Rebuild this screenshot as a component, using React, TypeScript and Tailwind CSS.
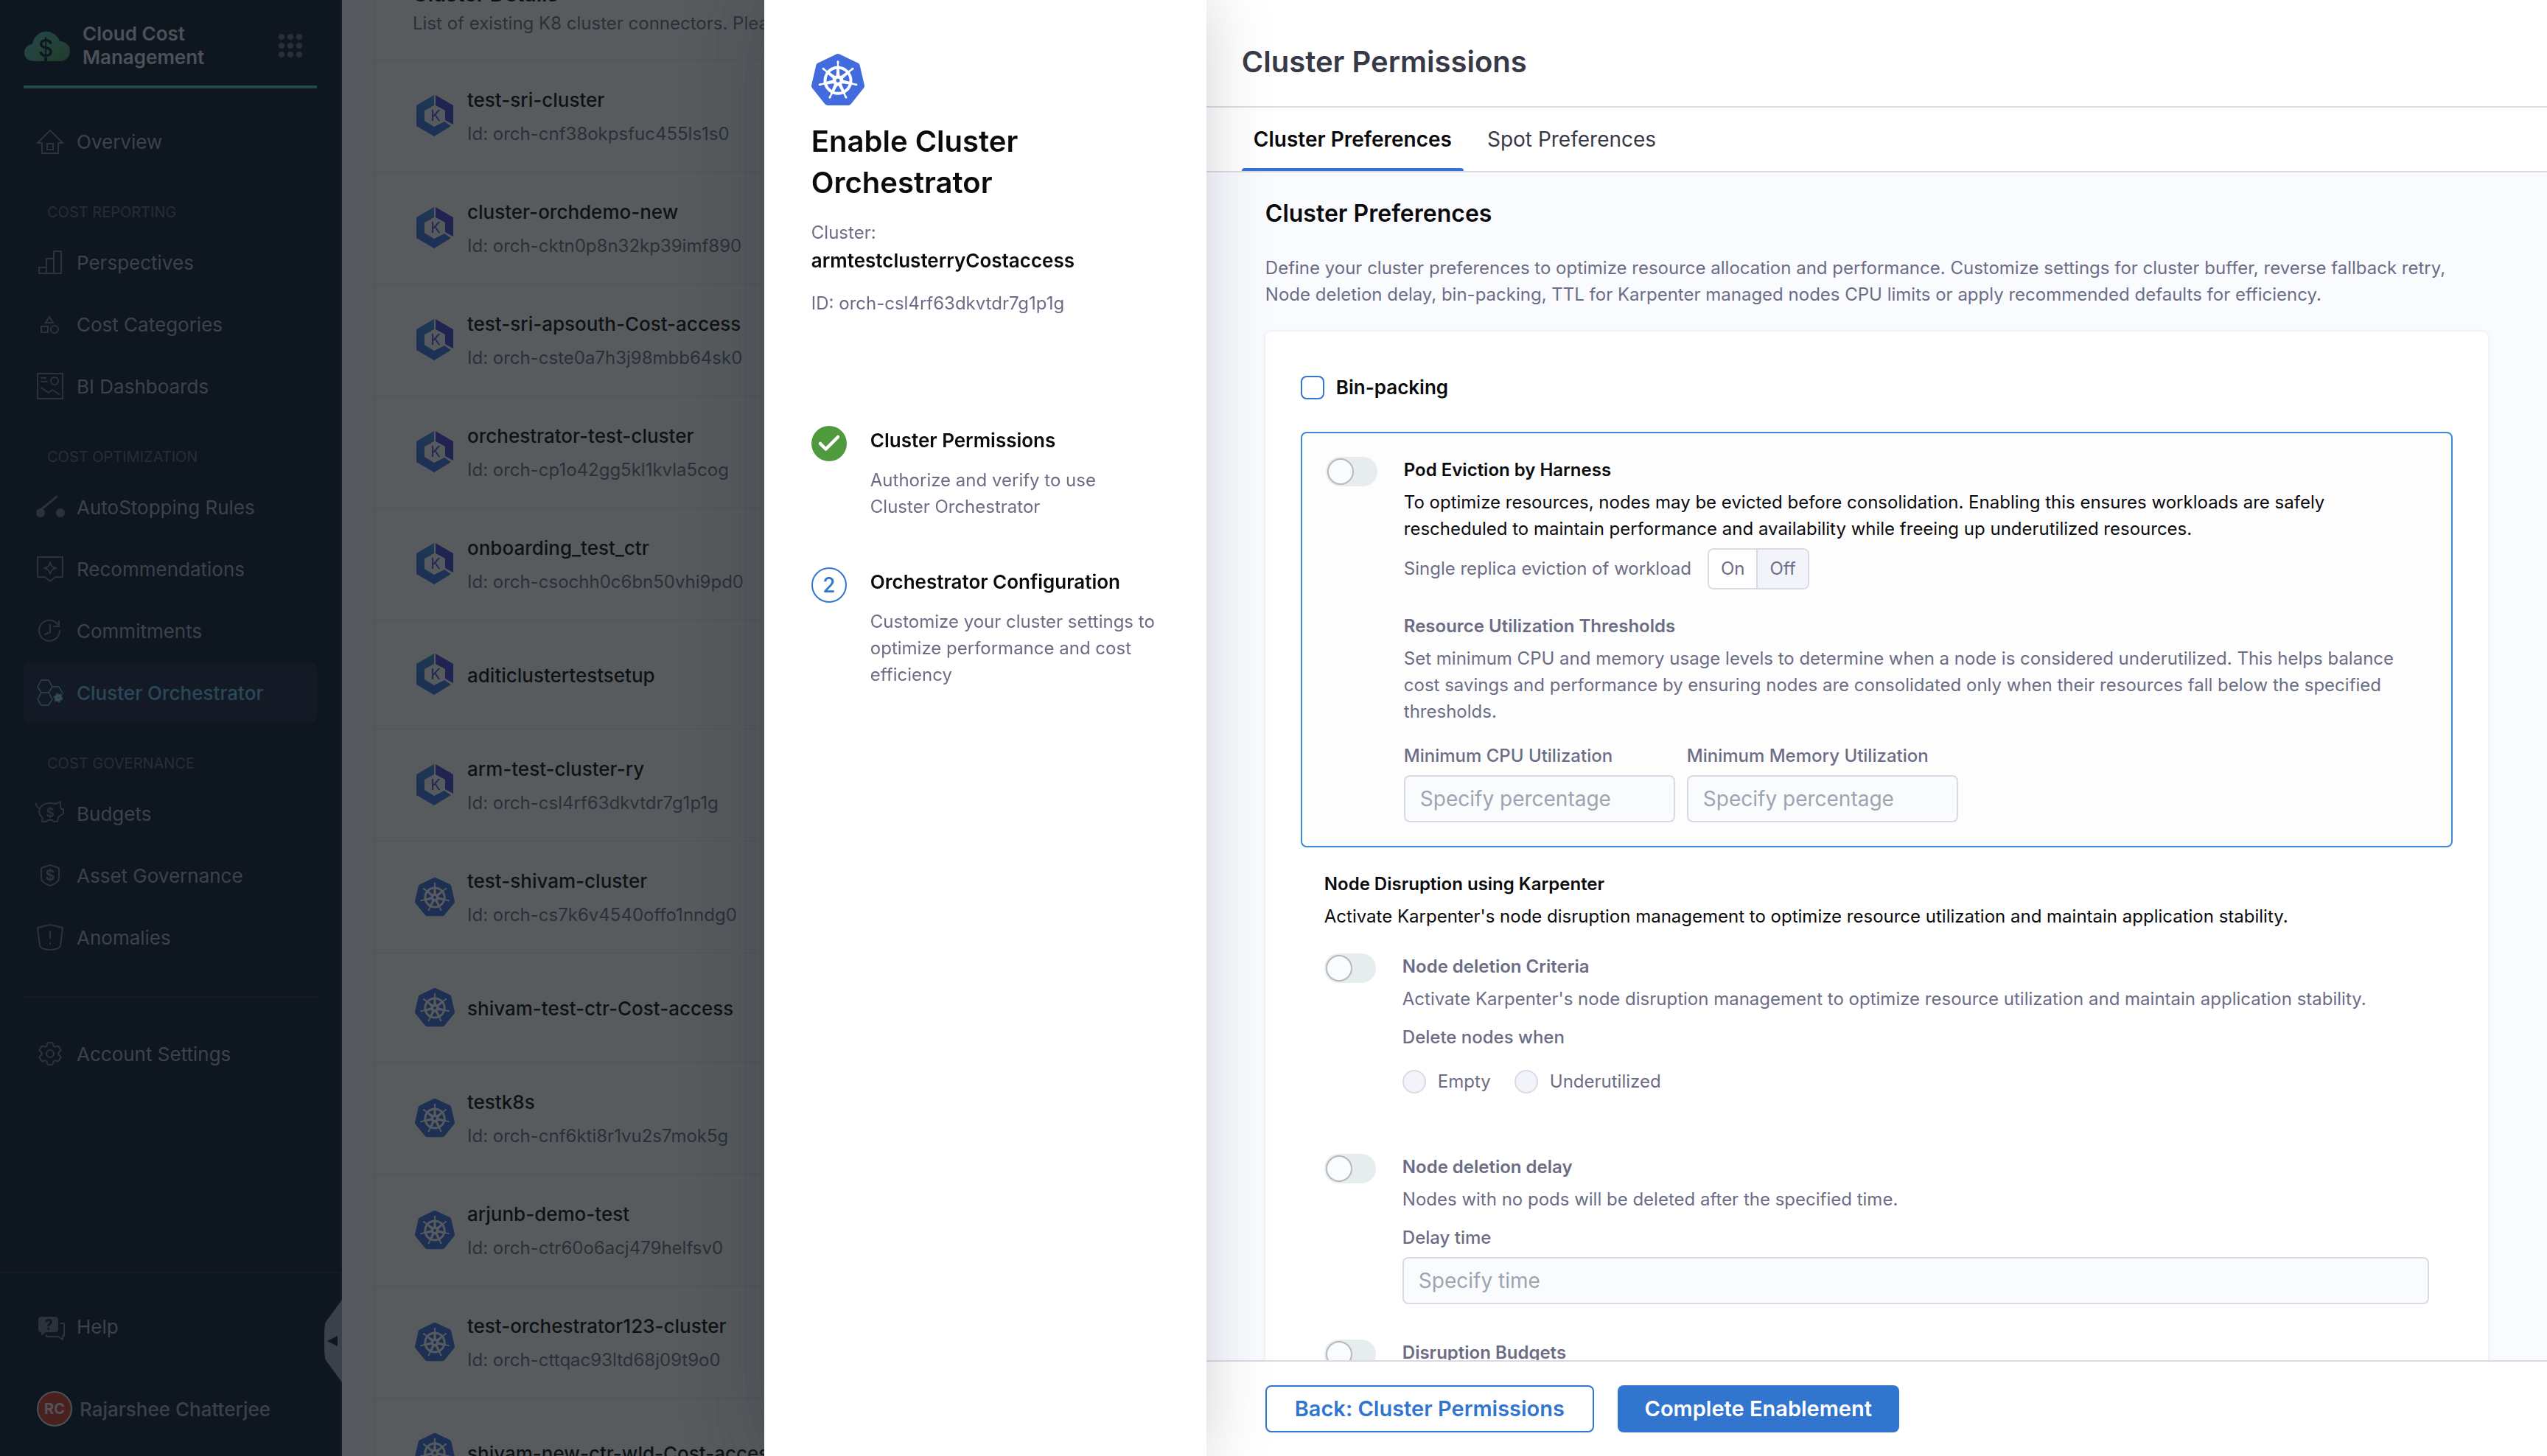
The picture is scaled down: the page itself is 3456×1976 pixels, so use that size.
import type { ReactNode } from 'react';
import { SiKubernetes } from 'react-icons/si';
import { HiOutlineCog6Tooth } from 'react-icons/hi2';
import { Check } from 'lucide-react';

const line = { fill: 'none', stroke: 'currentColor', strokeWidth: 2, strokeLinejoin: 'round', strokeLinecap: 'round' } as const;

function Glyph({ children }: { children: ReactNode }) {
  return (
    <svg viewBox="0 0 40 40" className="size-10 shrink-0" aria-hidden="true">
      {children}
    </svg>
  );
}

const icons = {
  overview: (
    <Glyph>
      <g {...line} strokeLinejoin="miter">
        <path d="M20 5 3 22h6v14h22V22h6z" />
        <path d="M16 23h8v8h-8z" />
      </g>
    </Glyph>
  ),
  perspectives: (
    <Glyph>
      <path {...line} d="M5 35v-8h10V15h10V5h10v30zM15 27v8M25 15v20" />
    </Glyph>
  ),
  categories: (
    <Glyph>
      <g {...line} strokeLinejoin="miter">
        <path d="M19 10l-5 8h10zM8 23h9v8H8z" />
        <circle cx="26" cy="27" r="5" />
      </g>
    </Glyph>
  ),
  dashboards: (
    <Glyph>
      <g {...line}>
        <path d="M3 3h34v34H3z" />
        <path d="M8 9h6M8 14h8M8 22l10 7 5-4 9 6" />
        <circle cx="26" cy="13" r="5" />
      </g>
    </Glyph>
  ),
  autostopping: (
    <Glyph>
      <circle cx="7" cy="28" r="6" fill="currentColor" />
      <circle cx="34" cy="28" r="6" fill="currentColor" />
      <path d="M7 24 29 6" {...line} strokeWidth={3} />
    </Glyph>
  ),
  recommendations: (
    <Glyph>
      <g {...line}>
        <path d="M3 4h34v27H27l-7 6-7-6H3z" />
        <path d="M20 11c1 5 3 7 8 8-5 1-7 3-8 8-1-5-3-7-8-8 5-1 7-3 8-8z" />
      </g>
    </Glyph>
  ),
  commitments: (
    <Glyph>
      <g {...line}>
        <path d="M33 20a14 14 0 1 1-3-9" />
        <path d="M32 7v7h-7M20 12v10l-7 3" />
      </g>
    </Glyph>
  ),
  orchestrator: (
    <Glyph>
      <path {...line} strokeWidth={1.5} d="M8 3h10l5 9-5 8H8l-5-8zM8 20h10l5 9-5 8H8l-5-8zM23 12h9l5 9" />
      <circle cx="31" cy="27" r="5" fill="currentColor" stroke="currentColor" strokeWidth="3" strokeDasharray="3 2" />
      <circle cx="31" cy="27" r="3" fill="none" stroke="#cfd4de" strokeWidth="1.5" />
    </Glyph>
  ),
  budgets: (
    <Glyph>
      <path
        {...line}
        d="M1 6c0 4 2 7 5 7C10 6 19 5 27 7l7-3v6l1 4h3v6l-7 5-1 6h-5l-2-2h-6l-2 2h-6l1-5c-4-3-6-7-4-13"
      />
      <text x="20" y="25" textAnchor="middle" fontSize="17" fontWeight="600" fill="currentColor">$</text>
    </Glyph>
  ),
  governance: (
    <Glyph>
      <path {...line} d="M20 6l12 4v13c0 5-6 9-12 11-6-2-12-6-12-11V10z" />
      <text x="20" y="27" textAnchor="middle" fontSize="20" fontWeight="700" fill="currentColor">$</text>
    </Glyph>
  ),
  anomalies: (
    <Glyph>
      <path {...line} d="M3 7l17-4 17 4-3 24c-1 8-27 8-28 0z" />
      <path {...line} d="M20 12v9M20 28v1" />
    </Glyph>
  ),
  settings: <HiOutlineCog6Tooth className="size-10 shrink-0" strokeWidth={1.3} />,
  help: (
    <Glyph>
      <path d="M8 7h19q4 0 4 4v13q0 4-4 4H14l-6 5v-5q-4 0-4-4V11q0-4 4-4z" fill="currentColor" />
      <path {...line} d="M34 16h5v17h-2v5l-6-4H15v-2" />
      <text x="18" y="25" textAnchor="middle" fontSize="20" fontWeight="700" fill="#0d192e">?</text>
    </Glyph>
  ),
};

type IconName = keyof typeof icons;

function NavItem({ icon, label, active = false }: { icon: IconName; label: string; active?: boolean }) {
  return (
    <a
      href="#"
      aria-current={active ? 'page' : undefined}
      className={
        active
          ? 'mb-1 flex h-20 items-center gap-4 rounded-lg bg-[#1f2640] px-4 font-medium text-[#6bbfea]'
          : 'mb-1 flex h-20 items-center gap-4 px-4 text-[#a8a8be]'
      }
    >
      <span className={active ? 'text-[#5fb4e0]' : 'text-[#72728a]'}>{icons[icon]}</span>
      {label}
    </a>
  );
}

function NavHeading({ children }: { children: string }) {
  return (
    <h2 className="flex h-20 items-end px-8 pb-3.5 text-[20px] leading-7 text-[#62627a]">{children}</h2>
  );
}

function Sidebar() {
  return (
    <nav className="relative flex w-[464px] shrink-0 flex-col border-r-2 border-[#2a2a38] bg-[#0d192e] text-[26px]">
      <div className="mx-8 mb-8 flex items-center border-b-4 border-[#5bc0c4] pt-[30px] pb-[22px]">
        <svg viewBox="0 0 60 44" className="mx-0.5 h-11 w-[60px] overflow-visible" aria-hidden="true">
          <defs>
            <linearGradient id="cloud" x1="0" y1="0" x2="1" y2="1">
              <stop offset="0" stopColor="#5bbcc4" />
              <stop offset="1" stopColor="#469a50" />
            </linearGradient>
          </defs>
          <path d="M11 43a11 11 0 0 1-1-23 19 19 0 0 1 37-4 13 13 0 0 1 1 27z" fill="url(#cloud)" />
          <text x="28" y="37" textAnchor="middle" fontSize="32" fontWeight="500" fill="#0d192e">$</text>
          <path d="M28 38v5" stroke="#0d192e" strokeWidth="4" />
        </svg>
        <h1 className="ml-4 flex-1 text-[26px] leading-8 font-semibold text-[#dcdce2]">
          Cloud Cost
          <br />
          Management
        </h1>
        <button aria-label="Modules" className="mr-5 grid grid-cols-3 gap-1 text-[#6a6a80]">
          {Array.from({ length: 9 }, (_, i) => (
            <span key={i} className="size-2 rounded-full bg-current" />
          ))}
        </button>
      </div>
      <div className="mx-8">
        <NavItem icon="overview" label="Overview" />
        <NavHeading>COST REPORTING</NavHeading>
        <NavItem icon="perspectives" label="Perspectives" />
        <NavItem icon="categories" label="Cost Categories" />
        <NavItem icon="dashboards" label="BI Dashboards" />
        <NavHeading>COST OPTIMIZATION</NavHeading>
        <NavItem icon="autostopping" label="AutoStopping Rules" />
        <NavItem icon="recommendations" label="Recommendations" />
        <NavItem icon="commitments" label="Commitments" />
        <NavItem icon="orchestrator" label="Cluster Orchestrator" active />
        <NavHeading>COST GOVERNANCE</NavHeading>
        <NavItem icon="budgets" label="Budgets" />
        <NavItem icon="governance" label="Asset Governance" />
        <NavItem icon="anomalies" label="Anomalies" />
        <hr className="mt-10 mb-9 border-t-2 border-[#2a2a38]" />
        <NavItem icon="settings" label="Account Settings" />
      </div>
      <div className="mt-auto border-t-2 border-[#2a2a38] px-8 pt-8 pb-6">
        <NavItem icon="help" label="Help" />
        <a href="#" className="mt-8 flex h-20 items-center gap-2.5 pl-[18px] font-medium text-[#a4a4ba]">
          <span className="grid size-12 place-items-center rounded-full border-2 border-[#dcdce2] bg-[#d23a2c] text-[20px] font-bold text-[#e6e6ec]">
            RC
          </span>
          Rajarshee Chatterjee
        </a>
      </div>
      <button aria-label="Collapse navigation" className="absolute right-[-2px] bottom-[100px] h-28 w-6">
        <svg viewBox="0 0 24 112" className="size-full">
          <path d="M24 0 2 30Q0 33 0 56t2 26l22 30z" fill="#a4a4ba" />
          <path d="M4 56l14-7v14z" fill="#0d192e" />
        </svg>
      </button>
    </nav>
  );
}

function EksIcon() {
  return (
    <svg viewBox="0 0 50 56" className="h-14 w-[50px]" aria-hidden="true">
      <defs>
        <linearGradient id="eks" x1="0" y1="0" x2="0" y2="1">
          <stop offset="0" stopColor="#3f8ad8" />
          <stop offset="1" stopColor="#3f6be4" />
        </linearGradient>
      </defs>
      <path d="M24 0v14L11 21v14l13 8 14-7 9 6-23 14L0 42V14z" fill="url(#eks)" />
      <path d="M26 0 50 14v26l-11-6V21l-13-7z" fill="#4a46d0" />
      <text x="26" y="35" textAnchor="middle" fontSize="20" fontWeight="400" fill="#4a4ad0">K</text>
    </svg>
  );
}

const clusters = [
  { name: 'test-sri-cluster', id: 'orch-cnf38okpsfuc455ls1s0', eks: true },
  { name: 'cluster-orchdemo-new', id: 'orch-cktn0p8n32kp39imf890', eks: true },
  { name: 'test-sri-apsouth-Cost-access', id: 'orch-cste0a7h3j98mbb64sk0', eks: true },
  { name: 'orchestrator-test-cluster', id: 'orch-cp1o42gg5kl1kvla5cog', eks: true },
  { name: 'onboarding_test_ctr', id: 'orch-csochh0c6bn50vhi9pd0', eks: true },
  { name: 'aditiclustertestsetup', eks: true },
  { name: 'arm-test-cluster-ry', id: 'orch-csl4rf63dkvtdr7g1p1g', eks: true },
  { name: 'test-shivam-cluster', id: 'orch-cs7k6v4540offo1nndg0' },
  { name: 'shivam-test-ctr-Cost-access' },
  { name: 'testk8s', id: 'orch-cnf6kti8r1vu2s7mok5g' },
  { name: 'arjunb-demo-test', id: 'orch-ctr60o6acj479helfsv0' },
  { name: 'test-orchestrator123-cluster', id: 'orch-cttqac93ltd68j09t9o0' },
  { name: 'shivam-new-ctr-wld-Cost-access' },
];

function ClusterList() {
  return (
    <main className="min-w-0 flex-1 overflow-hidden bg-[#fafbff] pr-12 pl-[46px]">
      <section className="-mt-6 bg-white shadow-[0_0_4px_rgba(40,41,61,0.2)]">
        <header className="border-b-2 border-[#f5f5f9] px-[50px] pb-[30px]">
          <h2 className="text-[28px] leading-8 font-semibold text-[#0b0b0d]">Cluster Details</h2>
          <p className="mt-1.5 text-[24px] leading-9 text-[#6b6d85]">
            List of existing K8 cluster connectors. Please enable the cluster orchestrator
          </p>
        </header>
        <ul>
          {clusters.map((c) => (
            <li
              key={c.name}
              className={
                c.id
                  ? 'flex h-[152px] items-center gap-4 border-b-2 border-[#f3f3f6] pl-[52px]'
                  : 'flex h-[148px] items-center gap-4 border-b-2 border-[#f3f3f6] pl-[52px]'
              }
            >
              <span className="grid w-14 place-items-center">
                {c.eks ? <EksIcon /> : <SiKubernetes className="size-[54px] text-[#426cdd]" />}
              </span>
              <div className="pt-1">
                <h3 className="text-[26px] leading-9 font-medium text-[#0b0b0d]">{c.name}</h3>
                {c.id && <p className="mt-2.5 text-[24px] leading-9 text-[#6b6d85]">Id: {c.id}</p>}
              </div>
            </li>
          ))}
        </ul>
      </section>
    </main>
  );
}

function StepsPanel() {
  return (
    <aside className="z-10 w-[600px] shrink-0 bg-white px-16 pt-[72px] text-[24px] leading-9 text-[#6b6d85] shadow-[0_0_80px_rgba(96,97,112,0.28)]">
      <SiKubernetes className="size-[72px] text-[#426cdd]" />
      <h2 className="mt-5 text-[40px] leading-14 font-semibold text-[#0b0b0d]">Enable Cluster Orchestrator</h2>
      <p className="mt-[22px]">Cluster:</p>
      <p className="text-[26px] leading-10 font-semibold text-[#0b0b0d]">armtestclusterryCostaccess</p>
      <p className="mt-5">ID: orch-csl4rf63dkvtdr7g1p1g</p>
      <ol className="mt-[148px] flex flex-col gap-16">
        <li className="flex gap-8">
          <span className="grid size-12 shrink-0 place-items-center rounded-full bg-[#4f9a3c] text-white">
            <Check className="size-9" strokeWidth={3} />
          </span>
          <div>
            <h3 className="text-[26px] leading-10 font-semibold text-[#0b0b0d]">Cluster Permissions</h3>
            <p className="mt-4">Authorize and verify to use Cluster Orchestrator</p>
          </div>
        </li>
        <li className="flex gap-8">
          <span className="grid size-12 shrink-0 place-items-center rounded-full border-2 border-[#3275ce] text-[28px] font-medium text-[#3275ce]">
            2
          </span>
          <div>
            <h3 className="text-[26px] leading-10 font-semibold text-[#0b0b0d]">Orchestrator Configuration</h3>
            <p className="mt-4">Customize your cluster settings to optimize performance and cost efficiency</p>
          </div>
        </li>
      </ol>
    </aside>
  );
}

function Toggle({ id, label }: { id: string; label: string }) {
  return (
    <span className="relative h-10 w-[70px] shrink-0">
      <input
        id={id}
        type="checkbox"
        role="switch"
        aria-label={label}
        className="block h-10 w-[70px] appearance-none rounded-full bg-[#e7ecef]"
      />
      <span className="pointer-events-none absolute top-0.5 left-0.5 size-9 rounded-full border-2 border-[#b5babf] bg-[#fafbfd]" />
    </span>
  );
}

const field =
  'h-16 w-full rounded-lg border-2 border-[#d9dae5] bg-[#fafbfd] px-5 text-[28px] placeholder:text-[#9ca5b1]';

function PodEviction() {
  return (
    <section className="mt-11 flex gap-9 rounded-lg border-2 border-[#3c8ad8] bg-[#fdfdfe] p-8">
      <Toggle id="pod-eviction" label="Pod Eviction by Harness" />
      <div className="min-w-0 flex-1">
        <h4 className="font-semibold text-[#0b0b0d]">Pod Eviction by Harness</h4>
        <p className="mt-2 text-[#0b0b0d]">
          To optimize resources, nodes may be evicted before consolidation. Enabling this ensures workloads are safely
          rescheduled to maintain performance and availability while freeing up underutilized resources.
        </p>
        <div className="mt-2 flex items-center gap-5.5" role="group" aria-label="Single replica eviction of workload">
          <span>Single replica eviction of workload</span>
          <div className="flex h-14 overflow-hidden rounded-lg border-2 border-[#d9dae5]">
            <button className="border-r-2 border-[#d9dae5] bg-white px-4">On</button>
            <button className="bg-[#f3f3fa] px-4">Off</button>
          </div>
        </div>
        <h4 className="mt-8 font-semibold">Resource Utilization Thresholds</h4>
        <p className="mt-2">
          Set minimum CPU and memory usage levels to determine when a node is considered underutilized. This helps
          balance cost savings and performance by ensuring nodes are consolidated only when their resources fall below
          the specified thresholds.
        </p>
        <div className="mt-6 flex gap-4">
          <div className="w-[368px]">
            <label htmlFor="min-cpu" className="mb-2 block font-medium">
              Minimum CPU Utilization
            </label>
            <input id="min-cpu" placeholder="Specify percentage" className={field} />
          </div>
          <div className="w-[368px]">
            <label htmlFor="min-memory" className="mb-2 block font-medium">
              Minimum Memory Utilization
            </label>
            <input id="min-memory" placeholder="Specify percentage" className={field} />
          </div>
        </div>
      </div>
    </section>
  );
}

function Radio({ id, label }: { id: string; label: string }) {
  return (
    <label htmlFor={id} className="flex items-center gap-4">
      <input
        id={id}
        type="radio"
        name="delete-when"
        className="size-8 appearance-none rounded-full border-2 border-[#d9dae5] bg-[#f3f3fa]"
      />
      {label}
    </label>
  );
}

function NodeDisruption() {
  return (
    <section className="px-8 pt-8">
      <h4 className="font-semibold text-[#0b0b0d]">Node Disruption using Karpenter</h4>
      <p className="mt-2 text-[#0b0b0d]">
        Activate Karpenter's node disruption management to optimize resource utilization and maintain application
        stability.
      </p>
      <div className="mt-8 flex gap-9">
        <Toggle id="node-criteria" label="Node deletion Criteria" />
        <div className="min-w-0 flex-1">
          <h4 className="font-semibold">Node deletion Criteria</h4>
          <p className="mt-2">
            Activate Karpenter's node disruption management to optimize resource utilization and maintain application
            stability.
          </p>
          <p className="mt-4 font-medium">Delete nodes when</p>
          <div className="mt-6 flex gap-8">
            <Radio id="when-empty" label="Empty" />
            <Radio id="when-underutilized" label="Underutilized" />
          </div>
        </div>
      </div>
      <div className="mt-20 flex gap-9">
        <Toggle id="node-delay" label="Node deletion delay" />
        <div className="min-w-0 flex-1">
          <h4 className="font-semibold">Node deletion delay</h4>
          <p className="mt-2">Nodes with no pods will be deleted after the specified time.</p>
          <label htmlFor="delay-time" className="mt-4 mb-2 block font-medium">
            Delay time
          </label>
          <input id="delay-time" placeholder="Specify time" className={field} />
        </div>
      </div>
      <div className="mt-12 flex gap-9 pb-16">
        <Toggle id="budgets" label="Disruption Budgets" />
        <h4 className="font-semibold">Disruption Budgets</h4>
      </div>
    </section>
  );
}

function ConfigPanel() {
  return (
    <div className="flex min-w-0 flex-1 flex-col bg-[#fafbff]">
      <header className="bg-white px-12 pt-14 pb-8">
        <h2 className="text-[40px] leading-14 font-semibold text-[#383946]">Cluster Permissions</h2>
      </header>
      <div role="tablist" className="flex h-[90px] border-y-2 border-[#d9dae5] bg-white px-12 text-[28px]">
        <button role="tab" aria-selected="true" className="flex flex-col items-center font-semibold text-[#0b0b0d]">
          <span className="flex flex-1 items-center px-4 pt-1">Cluster Preferences</span>
          <span className="h-1 w-full rounded-t bg-[#3275ce]" />
        </button>
        <button role="tab" aria-selected="false" className="flex flex-col items-center text-[#383946]">
          <span className="flex flex-1 items-center px-8 pt-1">Spot Preferences</span>
          <span className="h-1 w-full" />
        </button>
      </div>
      <div className="min-h-0 flex-1 overflow-hidden px-20 pt-8 text-[24px] leading-9 text-[#6b6d85]">
        <h3 className="text-[32px] leading-12 font-semibold text-[#0b0b0d]">Cluster Preferences</h3>
        <p className="mt-8">
          Define your cluster preferences to optimize resource allocation and performance. Customize settings for
          cluster buffer, reverse fallback retry, Node deletion delay, bin-packing, TTL for Karpenter managed nodes CPU
          limits or apply recommended defaults for efficiency.
        </p>
        <div className="mt-8 rounded-lg bg-white px-12 pt-[60px] shadow-[0_0_4px_rgba(40,41,61,0.1)]">
          <label htmlFor="bin-packing" className="flex h-8 items-center gap-4 text-[26px] font-semibold text-[#0b0b0d]">
            <input
              id="bin-packing"
              type="checkbox"
              className="size-8 appearance-none rounded-lg border-2 border-[#3275ce] bg-white"
            />
            Bin-packing
          </label>
          <PodEviction />
          <NodeDisruption />
        </div>
      </div>
      <footer className="flex gap-8 border-t-2 border-[#d9dae5] bg-white px-20 py-8 text-[29px] font-semibold">
        <button className="h-16 min-w-[446px] rounded-lg border-2 border-[#3275ce] bg-white px-8 text-[#3275ce]">
          Back: Cluster Permissions
        </button>
        <button className="h-16 min-w-[382px] rounded-lg bg-[#3275ce] px-8 text-white">Complete Enablement</button>
      </footer>
    </div>
  );
}

export default function App() {
  return (
    <div className="relative flex h-screen overflow-hidden font-[Inter,sans-serif]">
      <Sidebar />
      <ClusterList />
      <div className="fixed inset-0 bg-[rgba(16,22,26,0.7)]" />
      <div
        role="dialog"
        aria-label="Enable Cluster Orchestrator"
        className="fixed inset-y-0 right-0 flex w-[70%] shadow-[0_0_100px_rgba(16,22,26,0.3)]"
      >
        <StepsPanel />
        <ConfigPanel />
      </div>
    </div>
  );
}
